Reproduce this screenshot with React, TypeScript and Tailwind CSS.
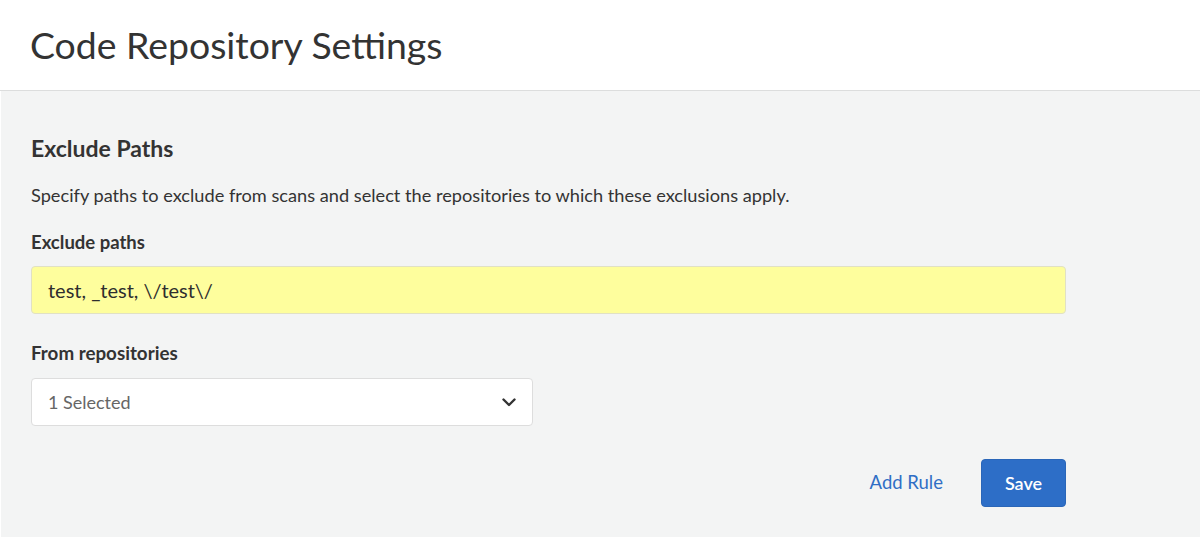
import React from "react";

export default function App() {
  return (
    <div className="flex h-[538px] w-[1200px] flex-col bg-white font-['Lato','Noto_Sans',sans-serif] text-[#333333]">
      <header className="flex h-[91px] shrink-0 items-center border-b border-[#dcdddd] bg-white px-[30px]">
        <h1 className="pb-[1px] text-[37.4px] leading-[44px] text-[#333333]">Code Repository Settings</h1>
      </header>
      <main className="ml-[1px] mb-[1px] flex-1 bg-[#f3f4f4] px-[30px] pt-[45px]">
        <div className="w-[1035px]">
          <h2 className="text-[23px] font-bold leading-[24px] text-[#333333]">Exclude Paths</h2>
          <p className="mt-[23px] text-[18.2px] leading-[24px] text-[#333333]">
            Specify paths to exclude from scans and select the repositories to which these exclusions apply.
          </p>
          <label className="mt-[23px] block text-[18.5px] font-bold leading-[24px] text-[#333333]">Exclude paths</label>
          <div className="mt-[12px] flex h-[48px] items-center rounded-[4px] border border-[#e1e1c4] bg-[#fefe9d] px-[16px] text-[20px] text-[#2e2e2e]">
            test, _test, \/test\/
          </div>
          <label className="mt-[27px] block text-[18.8px] font-bold leading-[24px] text-[#333333]">From repositories</label>
          <div className="mt-[13px] flex h-[48px] w-[502px] items-center justify-between rounded-[4px] border border-[#dddddd] bg-white pl-[16px] pr-[16px]">
            <span className="text-[18px] text-[#666666]">1 Selected</span>
            <svg width="14" height="9" viewBox="0 0 14 9" fill="none">
              <path d="M1.5 1.5 L7 7 L12.5 1.5" stroke="#333333" strokeWidth="2.4" strokeLinecap="round" strokeLinejoin="round" />
            </svg>
          </div>
          <div className="mt-[33px] flex items-center justify-end gap-[38px]">
            <button className="text-[18.5px] text-[#2f6ec5]">Add Rule</button>
            <button className="h-[48px] w-[85px] rounded-[4px] border border-[#2a66b8] bg-[#2d6ec7] text-[18px] font-semibold text-white">
              Save
            </button>
          </div>
        </div>
      </main>
    </div>
  );
}
